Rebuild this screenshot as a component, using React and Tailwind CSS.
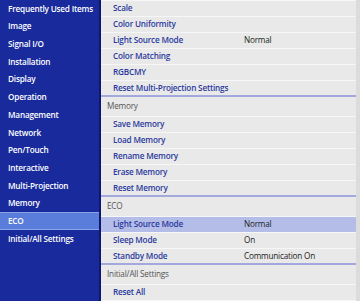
const menu = [
  'Frequently Used Items',
  'Image',
  'Signal I/O',
  'Installation',
  'Display',
  'Operation',
  'Management',
  'Network',
  'Pen/Touch',
  'Interactive',
  'Multi-Projection',
  'Memory',
  'ECO',
  'Initial/All Settings',
];

const sections = [
  {
    title: null,
    items: [
      { label: 'Scale' },
      { label: 'Color Uniformity' },
      { label: 'Light Source Mode', value: 'Normal' },
      { label: 'Color Matching' },
      { label: 'RGBCMY' },
      { label: 'Reset Multi-Projection Settings' },
    ],
  },
  {
    title: 'Memory',
    items: [
      { label: 'Save Memory' },
      { label: 'Load Memory' },
      { label: 'Rename Memory' },
      { label: 'Erase Memory' },
      { label: 'Reset Memory' },
    ],
  },
  {
    title: 'ECO',
    items: [
      { label: 'Light Source Mode', value: 'Normal', active: true },
      { label: 'Sleep Mode', value: 'On' },
      { label: 'Standby Mode', value: 'Communication On' },
    ],
  },
  {
    title: 'Initial/All Settings',
    items: [{ label: 'Reset All' }],
    open: true,
  },
];

function Row({ item, last }) {
  return (
    <div
      className={
        'flex items-center h-[16px] pl-[12px] whitespace-nowrap ' +
        (item.active ? 'bg-[#b3bde8] ' : '') +
        (last ? 'border-b-2 border-[#a3a9dc]' : 'border-b border-[#f6f6f6]')
      }
    >
      <span className="w-[131px] shrink-0 text-[#2b3a9e] font-semibold">{item.label}</span>
      {item.value && <span className="text-[#222] font-medium">{item.value}</span>}
    </div>
  );
}

export default function App() {
  return (
    <div
      className="flex w-[360px] h-[301px] overflow-hidden text-[8.2px] tracking-[-0.2px] leading-none"
      style={{ fontFamily: '"Open Sans", "Noto Sans", sans-serif' }}
    >
      <div className="w-[99px] bg-[#182a9c] flex flex-col">
        {menu.map(m => (
          <div
            key={m}
            className={
              'flex items-center h-[17.7px] pl-[8px] text-white font-semibold whitespace-nowrap ' +
              (m === 'ECO' ? 'bg-[#5a7ddc] border-y border-[#8aa2ea]' : '')
            }
          >
            {m}
          </div>
        ))}
      </div>
      <div className="w-[2px] bg-[#0f1670]"></div>
      <div className="flex-1 flex bg-[#e9e9e9]">
        <div className="flex-1 flex flex-col border-t border-[#f6f6f6]">
          {sections.map((s, i) => (
            <div key={i}>
              {s.title && (
                <div className="flex items-center h-[20px] pl-[6px] text-[#555] border-b border-[#f6f6f6]">
                  {s.title}
                </div>
              )}
              {s.items.map((it, j) => (
                <Row key={j} item={it} last={j === s.items.length - 1 && !s.open} />
              ))}
            </div>
          ))}
        </div>
        <div className="w-[4px] bg-[#dcdcdc]"></div>
      </div>
    </div>
  );
}
